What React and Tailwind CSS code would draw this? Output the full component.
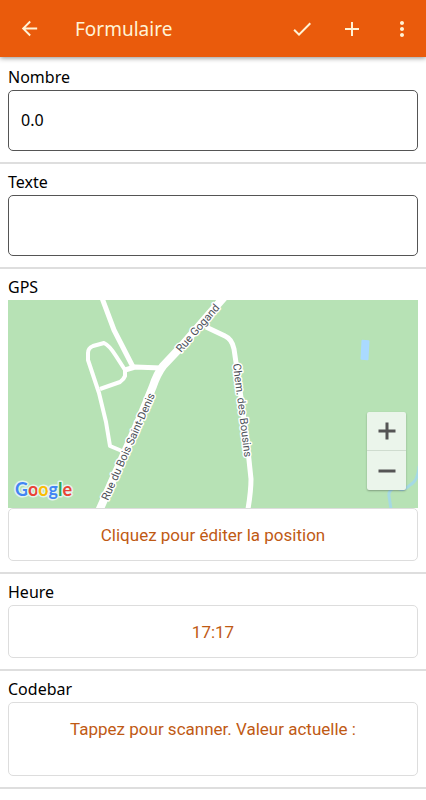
import React from "react";
import { MdArrowBack, MdCheck, MdAdd, MdMoreVert } from "react-icons/md";

const labelClass =
  "mb-[2px] block text-[16px] leading-[22px] text-black font-['Noto_Sans','Open_Sans',sans-serif]";
const inputClass =
  "block w-full h-[61px] rounded-[5px] border border-[#555555] bg-white px-3 pb-[2px] text-[16px] text-black outline-none font-['Noto_Sans','Open_Sans',sans-serif]";
const buttonClass =
  "block w-full rounded-[5px] border border-[#dddddd] bg-white text-center text-[17px] leading-5 text-[#bf5a14] font-[Roboto,sans-serif]";

function Field({ label, id, children }) {
  return (
    <section className="border-b-2 border-[#dedede] px-2 pt-[7px] pb-[11px]">
      <label htmlFor={id} className={labelClass}>
        {label}
      </label>
      {children}
    </section>
  );
}

function Header() {
  return (
    <header className="relative z-10 flex h-[57px] items-center bg-[#ea5b0c] text-[#fff3d6] shadow-[0_1px_5px_rgba(0,0,0,0.45)]">
      <button type="button" aria-label="Retour" className="ml-[18px]">
        <MdArrowBack className="size-[23px]" />
      </button>
      <h1 className="ml-[34px] flex-1 text-[19px] leading-7 font-['Noto_Sans','Open_Sans',sans-serif]">
        Formulaire
      </h1>
      <div className="flex items-center gap-[26px] pr-3">
        <button type="button" aria-label="Valider">
          <MdCheck className="size-6" />
        </button>
        <button type="button" aria-label="Ajouter">
          <MdAdd className="size-6" />
        </button>
        <button type="button" aria-label="Plus d'options">
          <MdMoreVert className="size-6" />
        </button>
      </div>
    </header>
  );
}

function MapDrawing() {
  return (
    <svg
      viewBox="0 0 410 208"
      preserveAspectRatio="xMidYMid slice"
      className="block h-full w-full bg-[#b7e2b5]"
      role="img"
      aria-label="Carte"
    >
      {/* water */}
      <rect x="353" y="40" width="8" height="20" rx="1" fill="#aadaff" transform="rotate(3 357 50)" />
      <path
        d="M411 166 Q410 181 402 185 Q394 193 388 187 Q380 190 381 196 L383 209"
        fill="none"
        stroke="#a5d9e3"
        strokeWidth="3"
      />

      {/* roads */}
      <g fill="none" stroke="#ffffff" strokeLinejoin="round">
        <path d="M94 -2 L106 30 L125 67" strokeWidth="5" />
        <path d="M153 68 L127 67 L117 70" strokeWidth="5" />
        <path
          d="M117 70 L108 56 Q101 45 96 43 L85 46 Q80 48 80 53 L80 60 L91 93 L98 122 L102 146 L114 151"
          strokeWidth="4"
        />
        <path d="M117 70 L117 76 Q116 79 112 82 L92 89" strokeWidth="4" />
        <path d="M217 -4 L171 49 L155 66 Q149 74 145 86 L132 118 L91 211" strokeWidth="8" />
        <path d="M198 27 L217 36 Q224 39 226 49 L230 76 L239 141 L243 179 Q243 191 240 209" strokeWidth="5" />
      </g>

      {/* street names */}
      <g
        fontFamily="Roboto, sans-serif"
        fontSize="11"
        fill="#4c5058"
        stroke="#ffffff"
        strokeWidth="3"
        strokeLinejoin="round"
        paintOrder="stroke"
      >
        <text transform="translate(173 53) rotate(-49)">Rue Gogand</text>
        <text transform="translate(100 201) rotate(-66)">Rue du Bois Saint-Denis</text>
        <text transform="translate(225 64) rotate(83)">Chem. des Bousins</text>
      </g>

      <text
        x="7"
        y="196"
        fontFamily="Lato, sans-serif"
        fontSize="18"
        fontWeight="700"
        stroke="#e3f4ee"
        strokeWidth="3"
        strokeLinejoin="round"
        paintOrder="stroke"
      >
        <tspan fill="#4285f4">G</tspan>
        <tspan fill="#ea4335">o</tspan>
        <tspan fill="#fbbc05">o</tspan>
        <tspan fill="#4285f4">g</tspan>
        <tspan fill="#34a853">l</tspan>
        <tspan fill="#ea4335">e</tspan>
      </text>
    </svg>
  );
}

function GpsMap() {
  return (
    <div className="relative h-[208px] overflow-hidden">
      <MapDrawing />
      <div className="absolute right-3 bottom-[18px] w-[39px] divide-y divide-[#cfdccf] rounded-[2px] bg-[#ebf5eb] text-[#555555] shadow-[0_1px_2px_rgba(0,0,0,0.3)]">
        <button
          type="button"
          aria-label="Zoom avant"
          className="flex h-[39px] w-full items-center justify-center"
        >
          <svg viewBox="0 0 18 18" className="size-[18px]" fill="currentColor">
            <path d="M7.5 0.5h3v7h7v3h-7v7h-3v-7h-7v-3h7z" />
          </svg>
        </button>
        <button
          type="button"
          aria-label="Zoom arrière"
          className="flex h-[39px] w-full items-center justify-center"
        >
          <svg viewBox="0 0 18 18" className="size-[18px]" fill="currentColor">
            <path d="M0.5 7.5h17v3h-17z" />
          </svg>
        </button>
      </div>
    </div>
  );
}

export default function App() {
  return (
    <div className="h-screen overflow-hidden bg-white">
      <Header />
      <main className="pt-[2px]">
        <Field label="Nombre" id="nombre">
          <input id="nombre" type="text" defaultValue="0.0" className={inputClass} />
        </Field>
        <Field label="Texte" id="texte">
          <input id="texte" type="text" className={inputClass} />
        </Field>
        <Field label="GPS" id="gps">
          <GpsMap />
          <button id="gps" type="button" className={`${buttonClass} h-[53px]`}>
            Cliquez pour éditer la position
          </button>
        </Field>
        <Field label="Heure" id="heure">
          <button id="heure" type="button" className={`${buttonClass} h-[53px]`}>
            17:17
          </button>
        </Field>
        <Field label="Codebar" id="codebar">
          <button id="codebar" type="button" className={`${buttonClass} h-[74px] pb-5`}>
            Tappez pour scanner. Valeur actuelle :
          </button>
        </Field>
        <Field label="Signature" id="signature">
          <input id="signature" type="text" className={inputClass} />
        </Field>
      </main>
    </div>
  );
}
